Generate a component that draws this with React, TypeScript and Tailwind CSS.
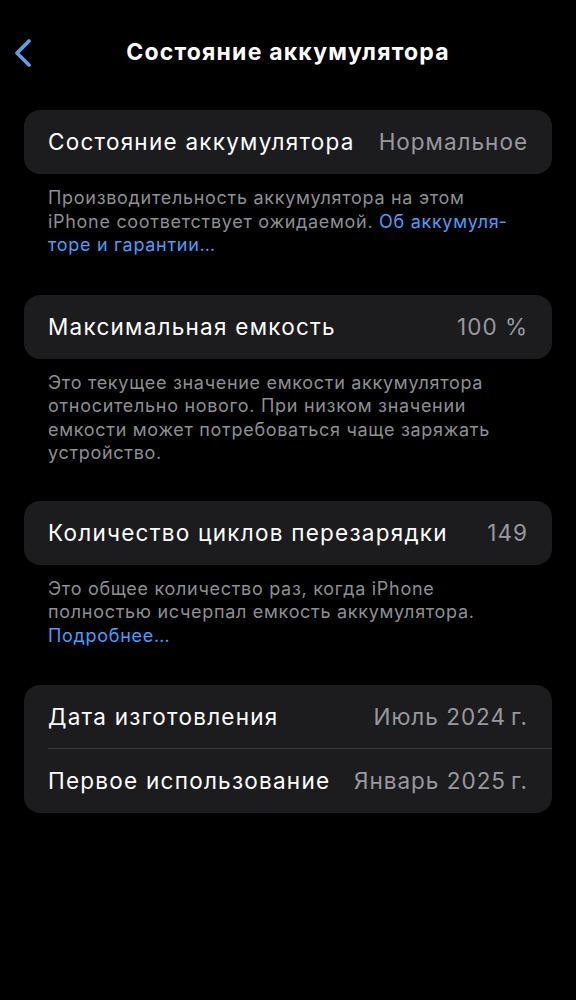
const font = { fontFamily: 'Inter, "Noto Sans", sans-serif' };

function Row({ label, value, divider }: { label: string; value: string; divider?: boolean }) {
  return (
    <div className="relative flex h-[64px] items-center justify-between px-6">
      <span className="text-[22.5px] tracking-[1.25px] text-white">{label}</span>
      <span className="text-[22.5px] tracking-[1px] text-[#98989e]">{value}</span>
      {divider && <div className="absolute bottom-0 left-6 right-0 h-px bg-[#38383a]" />}
    </div>
  );
}

function Footer({ children }: { children: React.ReactNode }) {
  return (
    <p className="px-12 pt-[12px] text-[18px] leading-[23.5px] tracking-[0.7px] text-[#8e8e93] [hyphens:manual]">
      {children}
    </p>
  );
}

export default function App() {
  return (
    <div className="min-h-[1000px] w-[576px] bg-black pt-[30px]" style={font}>
      <div className="relative flex h-[44px] items-center justify-center">
        <svg className="absolute left-[12px] top-[9px]" width="22" height="28" viewBox="0 0 22 28">
          <path d="M17 2 L5 14 L17 26" fill="none" stroke="#5aa2f0" strokeWidth="3.6" strokeLinecap="round" strokeLinejoin="round" />
        </svg>
        <h1 className="text-[23px] font-bold tracking-[1.2px] text-white">Состояние аккумулятора</h1>
      </div>

      <div className="px-6 pt-[36px]">
        <div className="rounded-[16px] bg-[#1c1c1e]">
          <Row label="Состояние аккумулятора" value="Нормальное" />
        </div>
      </div>
      <Footer>
        Производительность аккумулятора на этом iPhone соответствует ожидаемой.{" "}
        <span className="text-[#4a9df8]">Об аккумуля{"\u00AD"}торе и гарантии…</span>
      </Footer>

      <div className="px-6 pt-[38px]">
        <div className="rounded-[16px] bg-[#1c1c1e]">
          <Row label="Максимальная емкость" value="100 %" />
        </div>
      </div>
      <Footer>
        Это текущее значение емкости аккумулятора относительно нового. При низком значении емкости может
        потребоваться чаще заряжать устройство.
      </Footer>

      <div className="px-6 pt-[36px]">
        <div className="rounded-[16px] bg-[#1c1c1e]">
          <Row label="Количество циклов перезарядки" value="149" />
        </div>
      </div>
      <Footer>
        Это общее количество раз, когда iPhone полностью исчерпал емкость аккумулятора.{" "}
        <span className="text-[#4a9df8]">Подробнее…</span>
      </Footer>

      <div className="px-6 pt-[38px]">
        <div className="rounded-[16px] bg-[#1c1c1e]">
          <Row label="Дата изготовления" value={"Июль 2024\u2009г."} divider />
          <Row label="Первое использование" value={"Январь 2025\u2009г."} />
        </div>
      </div>
    </div>
  );
}
